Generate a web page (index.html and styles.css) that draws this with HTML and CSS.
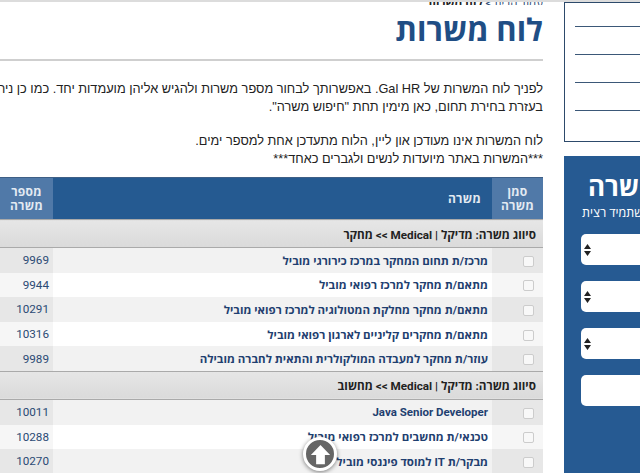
FILE: index.html
```html
<!DOCTYPE html>
<html lang="he" dir="rtl">
<head>
<meta charset="utf-8">
<title>לוח משרות</title>
<link rel="stylesheet" href="styles.css">
</head>
<body>
<div class="page">
  <aside class="side">
    <div class="side-box">
      <div class="side-line"></div>
      <div class="side-line"></div>
      <div class="side-line"></div>
      <div class="side-line"></div>
    </div>
    <form class="search">
      <h2 class="search-title">חיפוש משרה</h2>
      <p class="search-sub">מצא את המשרה שתמיד רצית</p>
      <div class="field"><svg class="arrows" viewBox="0 0 7 12" width="7" height="12"><path d="M3.5 0 L7 5 H0 Z M3.5 12 L0 7 H7 Z" fill="#222"/></svg></div>
      <div class="field"><svg class="arrows" viewBox="0 0 7 12" width="7" height="12"><path d="M3.5 0 L7 5 H0 Z M3.5 12 L0 7 H7 Z" fill="#222"/></svg></div>
      <div class="field"><svg class="arrows" viewBox="0 0 7 12" width="7" height="12"><path d="M3.5 0 L7 5 H0 Z M3.5 12 L0 7 H7 Z" fill="#222"/></svg></div>
      <div class="field"></div>
    </form>
  </aside>
  <main class="main">
    <div class="crumbs">עמוד הבית &gt; <b>לוח משרות</b></div>
    <h1 class="title">לוח משרות</h1>
    <div class="intro">
      <p>לפניך לוח המשרות של Gal HR. באפשרותך לבחור מספר משרות ולהגיש אליהן מועמדות יחד. כמו כן ניתן לסנן את המשרות<br>בעזרת בחירת תחום, כאן מימין תחת "חיפוש משרה".</p>
      <p>לוח המשרות אינו מעודכן און ליין, הלוח מתעדכן אחת למספר ימים.<br>***המשרות באתר מיועדות לנשים ולגברים כאחד***</p>
    </div>
    <table class="jobs">
      <thead>
        <tr><th class="c-check">סמן<br>משרה</th><th class="c-job">משרה</th><th class="c-num">מספר<br>משרה</th></tr>
      </thead>
      <tbody>
        <tr class="cat"><td colspan="3">סיווג משרה: מדיקל | Medical &gt;&gt; מחקר</td></tr>
        <tr class="odd"><td class="c-check"><span class="box"></span></td><td class="c-job">מרכז/ת תחום המחקר במרכז כירורגי מוביל</td><td class="c-num">9969</td></tr>
        <tr><td class="c-check"><span class="box"></span></td><td class="c-job">מתאם/ת מחקר למרכז רפואי מוביל</td><td class="c-num">9944</td></tr>
        <tr class="odd"><td class="c-check"><span class="box"></span></td><td class="c-job">מתאם/ת מחקר מחלקת המטולוגיה למרכז רפואי מוביל</td><td class="c-num">10291</td></tr>
        <tr><td class="c-check"><span class="box"></span></td><td class="c-job">מתאם/ת מחקרים קליניים לארגון רפואי מוביל</td><td class="c-num">10316</td></tr>
        <tr class="odd"><td class="c-check"><span class="box"></span></td><td class="c-job">עוזר/ת מחקר למעבדה המולקולרית והתאית לחברה מובילה</td><td class="c-num">9989</td></tr>
        <tr class="cat"><td colspan="3">סיווג משרה: מדיקל | Medical &gt;&gt; מחשוב</td></tr>
        <tr class="odd"><td class="c-check"><span class="box"></span></td><td class="c-job">Java Senior Developer</td><td class="c-num">10011</td></tr>
        <tr><td class="c-check"><span class="box"></span></td><td class="c-job">טכנאי/ת מחשבים למרכז רפואי מוביל</td><td class="c-num">10288</td></tr>
        <tr class="odd"><td class="c-check"><span class="box"></span></td><td class="c-job">מבקר/ת IT למוסד פיננסי מוביל</td><td class="c-num">10270</td></tr>
      </tbody>
    </table>
  </main>
</div>
<button class="to-top" type="button" aria-label="למעלה">
  <svg viewBox="0 0 24 24" width="21" height="21"><path d="M12 1 L23 12.5 H17 V23 H7 V12.5 H1 Z" fill="#fff"/></svg>
</button>
</body>
</html>
```
FILE: styles.css
```css
html, body {
  margin: 0;
  padding: 0;
  height: 473px;
  overflow: hidden;
  background: #fff;
}
body {
  font-family: "Roboto", "Open Sans", "Liberation Sans", sans-serif;
  color: #222;
  border-top: 2px solid #dcdcdc;
  box-sizing: border-box;
}
.page {
  display: flex;
  direction: rtl;
  gap: 21px;
  width: 640px;
  height: 471px;
  overflow: hidden;
}
.side {
  flex: 0 0 76px;
  display: flex;
  flex-direction: column;
  gap: 14px;
}
.side-box {
  height: 140px;
  width: 200px;
  flex: none;
  margin-right: -124px;
  border: 1px solid #2d4a6b;
  box-sizing: border-box;
  direction: ltr;
  padding: 23px 0 0 10px;
  display: flex;
  flex-direction: column;
  gap: 27px;
}
.side-line { height: 1px; background: #3b5878; }
.search {
  flex: 1;
  width: 200px;
  margin-right: -124px;
  background: #265a92;
  color: #fff;
  box-sizing: border-box;
  padding: 15px 0 0 17px;
  direction: ltr;
}
.search-title {
  margin: 0 0 0 7px;
  font: 700 26px/32px "Roboto", "Open Sans", sans-serif;
  white-space: nowrap;
  direction: rtl;
  text-align: left;
}
.search-sub {
  margin: 2px 0 13px 1px;
  font-size: 12.5px;
  line-height: 16px;
  white-space: nowrap;
  direction: rtl;
  text-align: left;
}
.field {
  height: 31px;
  background: #fff;
  border-radius: 5px;
  margin-bottom: 16px;
  display: flex;
  align-items: center;
  padding-left: 3px;
}
.main {
  flex: 0 0 543px;
  min-width: 0;
  width: 543px;
}
.crumbs {
  height: 3px;
  line-height: 3px;
  font-size: 11.5px;
  color: #2b4a74;
  overflow: hidden;
}
.crumbs b { color: #222; }
.title {
  margin: 6px 0 0;
  font: 700 31px/40px "Roboto", "Open Sans", sans-serif;
  color: #1f4e85;
  padding-bottom: 8px;
  border-bottom: 2px solid #cfcfcf;
}
.intro {
  margin-top: 19px;
  font-family: "Liberation Sans", sans-serif;
  font-size: 12.75px;
  line-height: 17.5px;
  white-space: nowrap;
  color: #222;
}
.intro p { margin: 0 0 17px; }
.jobs {
  width: 543px;
  margin-top: -7px;
  border-collapse: collapse;
  table-layout: fixed;
  font-size: 11.5px;
}
.jobs th {
  height: 41px;
  padding: 0;
  background: #255a91;
  color: #e3eaf2;
  font-weight: 700;
  font-size: 12px;
  letter-spacing: .3px;
  line-height: 14px;
  border-top: 1px solid #3e5f86;
}
.jobs th.c-job { text-align: right; padding-right: 11px; }
.jobs th.c-check { width: 51px; background: #5079a8; }
.jobs th.c-num { width: 53px; background: #5079a8; }
.cat td {
  height: 27px;
  padding: 0 7px 0 0;
  background: linear-gradient(#e6e6e6, #dadada);
  border-top: 1px solid #aaa;
  border-bottom: 1px solid #aaa;
  font-weight: 700;
  font-size: 11.7px;
  color: #222;
}
.jobs td.c-check, .jobs td.c-job, .jobs td.c-num { height: 24.6px; padding: 0; }
.jobs td.c-check { background: #f6f6f6; text-align: right; padding-right: 9px; }
.jobs td.c-job { background: #fff; font-weight: 700; color: #1f3f70; padding-right: 4px; }
.jobs td.c-num { background: #f6f6f6; color: #2b4a74; padding-right: 4px; font-size: 11.7px; }
.odd td.c-check, .odd td.c-num { background: #e7e7e7; }
.odd td.c-job { background: #f2f2f2; }
.box {
  display: inline-block;
  width: 9px;
  height: 9px;
  background: #f8f8f8;
  border: 1px solid #ccc;
  border-radius: 2px;
  vertical-align: middle;
}
.to-top {
  position: fixed;
  left: 303px;
  top: 437px;
  width: 34px;
  height: 34px;
  padding: 0;
  border: 3px solid #fff;
  border-radius: 50%;
  background: #666;
  box-shadow: 0 1px 4px rgba(0,0,0,.5);
  display: flex;
  align-items: center;
  justify-content: center;
}
```
